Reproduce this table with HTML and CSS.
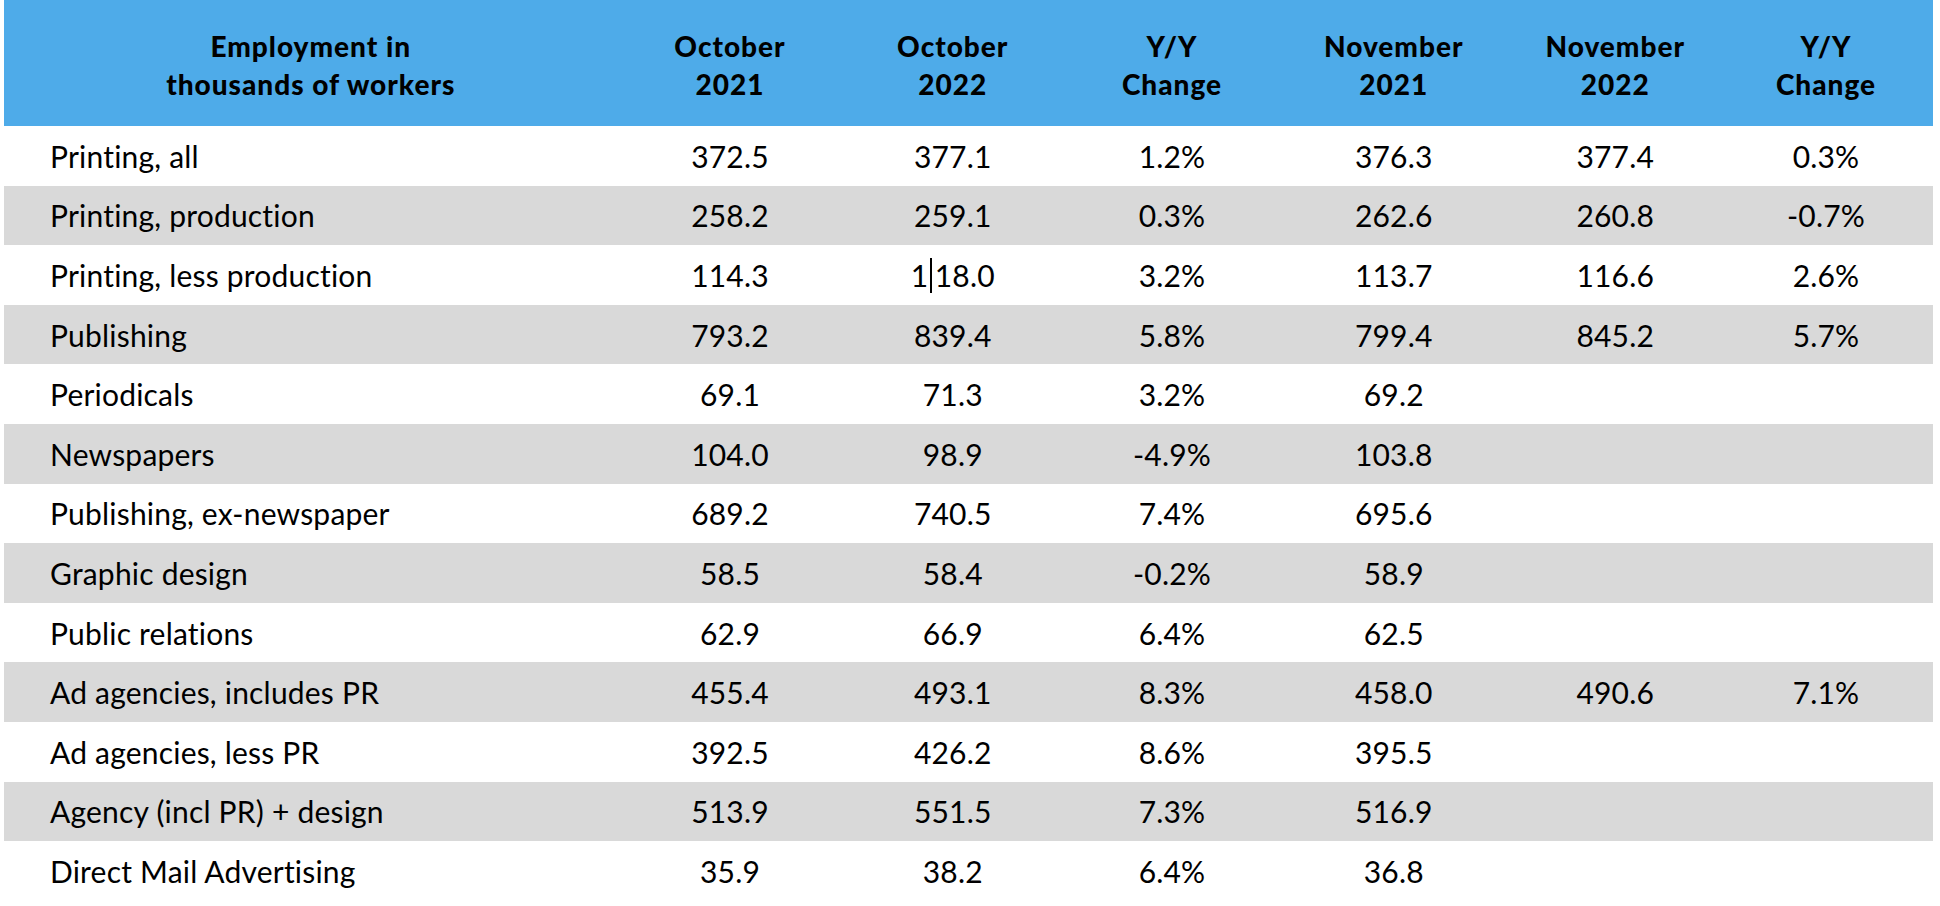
FILE: index.html
```html
<!DOCTYPE html>
<html lang="en">
<head>
<meta charset="utf-8">
<title>Employment in thousands of workers</title>
<link rel="stylesheet" href="styles.css">
</head>
<body>
<div class="sheet">
  <div class="row head">
    <div class="cell label">Employment in<br>thousands of workers</div>
    <div class="cell">October<br>2021</div>
    <div class="cell">October<br>2022</div>
    <div class="cell">Y/Y<br>Change</div>
    <div class="cell">November<br>2021</div>
    <div class="cell">November<br>2022</div>
    <div class="cell">Y/Y<br>Change</div>
  </div>
  <div class="row">
    <div class="cell label">Printing, all</div>
    <div class="cell">372.5</div><div class="cell">377.1</div><div class="cell">1.2%</div>
    <div class="cell">376.3</div><div class="cell">377.4</div><div class="cell">0.3%</div>
  </div>
  <div class="row alt">
    <div class="cell label">Printing, production</div>
    <div class="cell">258.2</div><div class="cell">259.1</div><div class="cell">0.3%</div>
    <div class="cell">262.6</div><div class="cell">260.8</div><div class="cell">-0.7%</div>
  </div>
  <div class="row">
    <div class="cell label">Printing, less production</div>
    <div class="cell">114.3</div><div class="cell">1<span class="caret"></span>18.0</div><div class="cell">3.2%</div>
    <div class="cell">113.7</div><div class="cell">116.6</div><div class="cell">2.6%</div>
  </div>
  <div class="row alt">
    <div class="cell label">Publishing</div>
    <div class="cell">793.2</div><div class="cell">839.4</div><div class="cell">5.8%</div>
    <div class="cell">799.4</div><div class="cell">845.2</div><div class="cell">5.7%</div>
  </div>
  <div class="row">
    <div class="cell label">Periodicals</div>
    <div class="cell">69.1</div><div class="cell">71.3</div><div class="cell">3.2%</div>
    <div class="cell">69.2</div><div class="cell"></div><div class="cell"></div>
  </div>
  <div class="row alt">
    <div class="cell label">Newspapers</div>
    <div class="cell">104.0</div><div class="cell">98.9</div><div class="cell">-4.9%</div>
    <div class="cell">103.8</div><div class="cell"></div><div class="cell"></div>
  </div>
  <div class="row">
    <div class="cell label">Publishing, ex-newspaper</div>
    <div class="cell">689.2</div><div class="cell">740.5</div><div class="cell">7.4%</div>
    <div class="cell">695.6</div><div class="cell"></div><div class="cell"></div>
  </div>
  <div class="row alt">
    <div class="cell label">Graphic design</div>
    <div class="cell">58.5</div><div class="cell">58.4</div><div class="cell">-0.2%</div>
    <div class="cell">58.9</div><div class="cell"></div><div class="cell"></div>
  </div>
  <div class="row">
    <div class="cell label">Public relations</div>
    <div class="cell">62.9</div><div class="cell">66.9</div><div class="cell">6.4%</div>
    <div class="cell">62.5</div><div class="cell"></div><div class="cell"></div>
  </div>
  <div class="row alt">
    <div class="cell label">Ad agencies, includes PR</div>
    <div class="cell">455.4</div><div class="cell">493.1</div><div class="cell">8.3%</div>
    <div class="cell">458.0</div><div class="cell">490.6</div><div class="cell">7.1%</div>
  </div>
  <div class="row">
    <div class="cell label">Ad agencies, less PR</div>
    <div class="cell">392.5</div><div class="cell">426.2</div><div class="cell">8.6%</div>
    <div class="cell">395.5</div><div class="cell"></div><div class="cell"></div>
  </div>
  <div class="row alt">
    <div class="cell label">Agency (incl PR) + design</div>
    <div class="cell">513.9</div><div class="cell">551.5</div><div class="cell">7.3%</div>
    <div class="cell">516.9</div><div class="cell"></div><div class="cell"></div>
  </div>
  <div class="row">
    <div class="cell label">Direct Mail Advertising</div>
    <div class="cell">35.9</div><div class="cell">38.2</div><div class="cell">6.4%</div>
    <div class="cell">36.8</div><div class="cell"></div><div class="cell"></div>
  </div>
</div>
</body>
</html>
```
FILE: styles.css
```css
html, body {
  margin: 0;
  padding: 0;
  background: #ffffff;
}

body {
  font-family: "Lato", "Liberation Sans", sans-serif;
  color: #000000;
  width: 1940px;
  height: 906px;
  overflow: hidden;
}

.sheet {
  margin-left: 4px;
  width: 1929px;
}

.row {
  display: grid;
  grid-template-columns: 613.5px 225px 220.5px 218px 225.5px 217.5px 204px;
  height: 59.6px;
  align-items: center;
  font-size: 30px;
  line-height: 1.2;
  letter-spacing: 0.2px;
}

.row.alt {
  background: #d9d9d9;
}

.row.head {
  height: 126px;
  background: #4eabe9;
  font-size: 28px;
  font-weight: 900;
  line-height: 38px;
  letter-spacing: 1px;
  padding-top: 3px;
  box-sizing: border-box;
}

.cell {
  text-align: center;
  white-space: nowrap;
}

.row .label {
  text-align: left;
  padding-left: 46px;
}

.row.head .label {
  text-align: center;
  padding-left: 0;
}

.caret {
  display: inline-block;
  width: 1.5px;
  height: 35px;
  background: #000000;
  vertical-align: -6px;
  margin: 0 3px 0 2px;
}
```
